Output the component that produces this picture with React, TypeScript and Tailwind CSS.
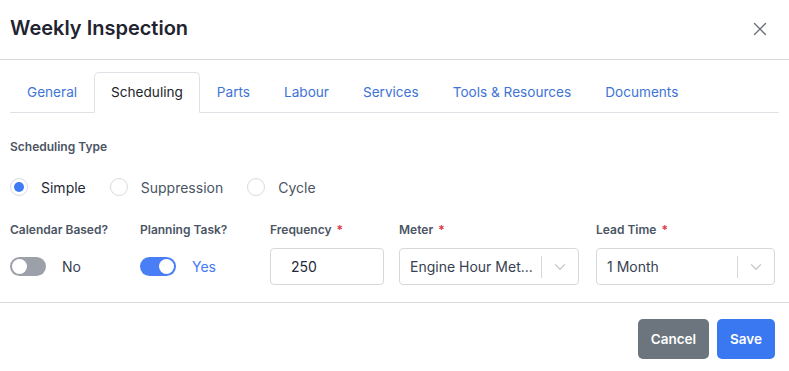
import React from 'react';
import { X, ChevronDown } from 'lucide-react';

const tabs = ['General', 'Scheduling', 'Parts', 'Labour', 'Services', 'Tools & Resources', 'Documents'];

function Radio({ label, checked }: { label: string; checked?: boolean }) {
  return (
    <label className="flex items-center gap-[13px]">
      <span className="w-[18px] h-[18px] rounded-full border border-[#d9dbe0] flex items-center justify-center bg-white">
        {checked && <span className="w-[10px] h-[10px] rounded-full bg-[#3f7bf5]" />}
      </span>
      <span className={checked ? 'text-[#1f2937]' : 'text-[#4b5563]'}>{label}</span>
    </label>
  );
}

function Toggle({ on, label }: { on?: boolean; label: string }) {
  return (
    <div className="flex items-center gap-[16px] h-[37px]">
      <span className={`w-[36px] h-[19px] rounded-full flex items-center px-[2px] ${on ? 'bg-[#4a7ef6] justify-end' : 'bg-[#9ca1a9] justify-start'}`}>
        <span className="w-[15px] h-[15px] rounded-full bg-white" />
      </span>
      <span className={on ? 'text-[#3f7bf5]' : 'text-[#374151]'}>{label}</span>
    </div>
  );
}

function Label({ text, required }: { text: string; required?: boolean }) {
  return (
    <div className="text-[12px] font-semibold text-[#4b5563] h-[18px] leading-[18px] mb-[9px]">
      {text}
      {required && <span className="text-[#dc3545] ml-[5px]">*</span>}
    </div>
  );
}

function Select({ value, width }: { value: string; width: string }) {
  return (
    <div className={`${width} h-[37px] border border-[#d6d8dc] rounded-[4px] flex items-center`}>
      <span className="flex-1 min-w-0 pl-[10px] pr-[8px] whitespace-nowrap text-[#374151]">{value}</span>
      <span className="w-px h-[22px] bg-[#d6d8dc]" />
      <span className="w-[36px] flex justify-center text-[#c5c8cd]">
        <ChevronDown size={18} strokeWidth={1.6} />
      </span>
    </div>
  );
}

export default function App() {
  return (
    <div className="w-[789px] h-[371px] bg-white text-[14px]" style={{ fontFamily: 'Inter, "Noto Sans", sans-serif' }}>
      <div className="h-[60px] flex items-center justify-between pl-[10px] pr-[18px] pb-[4px] border-b border-[#d9dbe0]">
        <h1 className="text-[20px] font-semibold text-[#1f2430]">Weekly Inspection</h1>
        <X size={22} strokeWidth={1.5} className="text-[#6b6f76] mt-[2px]" />
      </div>

      <div className="px-[10px] pt-[12px]">
        <div className="flex border-b border-[#dee2e6] h-[41px]">
          {tabs.map((t) => (
            <div
              key={t}
              className={`px-[16px] flex items-center text-[13.6px] -mb-px ${
                t === 'Scheduling'
                  ? 'border border-[#dee2e6] border-b-white rounded-t-[5px] bg-white text-[#212529]'
                  : 'text-[#3e74d6] border border-transparent'
              }`}
            >
              {t}
            </div>
          ))}
        </div>

        <div className="pt-[25px] text-[12px] font-semibold text-[#4b5563] leading-[18px]">Scheduling Type</div>

        <div className="flex items-center gap-[24px] mt-[21px] h-[20px]">
          <Radio label="Simple" checked />
          <Radio label="Suppression" />
          <Radio label="Cycle" />
        </div>

        <div className="flex mt-[24px]">
          <div className="w-[130px]">
            <Label text="Calendar Based?" />
            <Toggle label="No" />
          </div>
          <div className="w-[130px]">
            <Label text="Planning Task?" />
            <Toggle on label="Yes" />
          </div>
          <div className="w-[129px]">
            <Label text="Frequency" required />
            <div className="w-[114px] h-[37px] border border-[#d6d8dc] rounded-[4px] flex items-center pl-[20px] text-[#1f2937]">
              250
            </div>
          </div>
          <div className="w-[197px]">
            <Label text="Meter" required />
            <Select value="Engine Hour Met..." width="w-[180px]" />
          </div>
          <div>
            <Label text="Lead Time" required />
            <Select value="1 Month" width="w-[179px]" />
          </div>
        </div>
      </div>

      <div className="mt-[17px] border-t border-[#d9dbe0] flex justify-end gap-[8px] pr-[14px] pt-[16px]">
        <button className="h-[40px] px-[13px] rounded-[5px] bg-[#6c757d] text-white text-[13.5px] font-semibold">Cancel</button>
        <button className="h-[40px] px-[13px] rounded-[5px] bg-[#3a78f2] text-white text-[13.5px] font-semibold">Save</button>
      </div>
    </div>
  );
}
